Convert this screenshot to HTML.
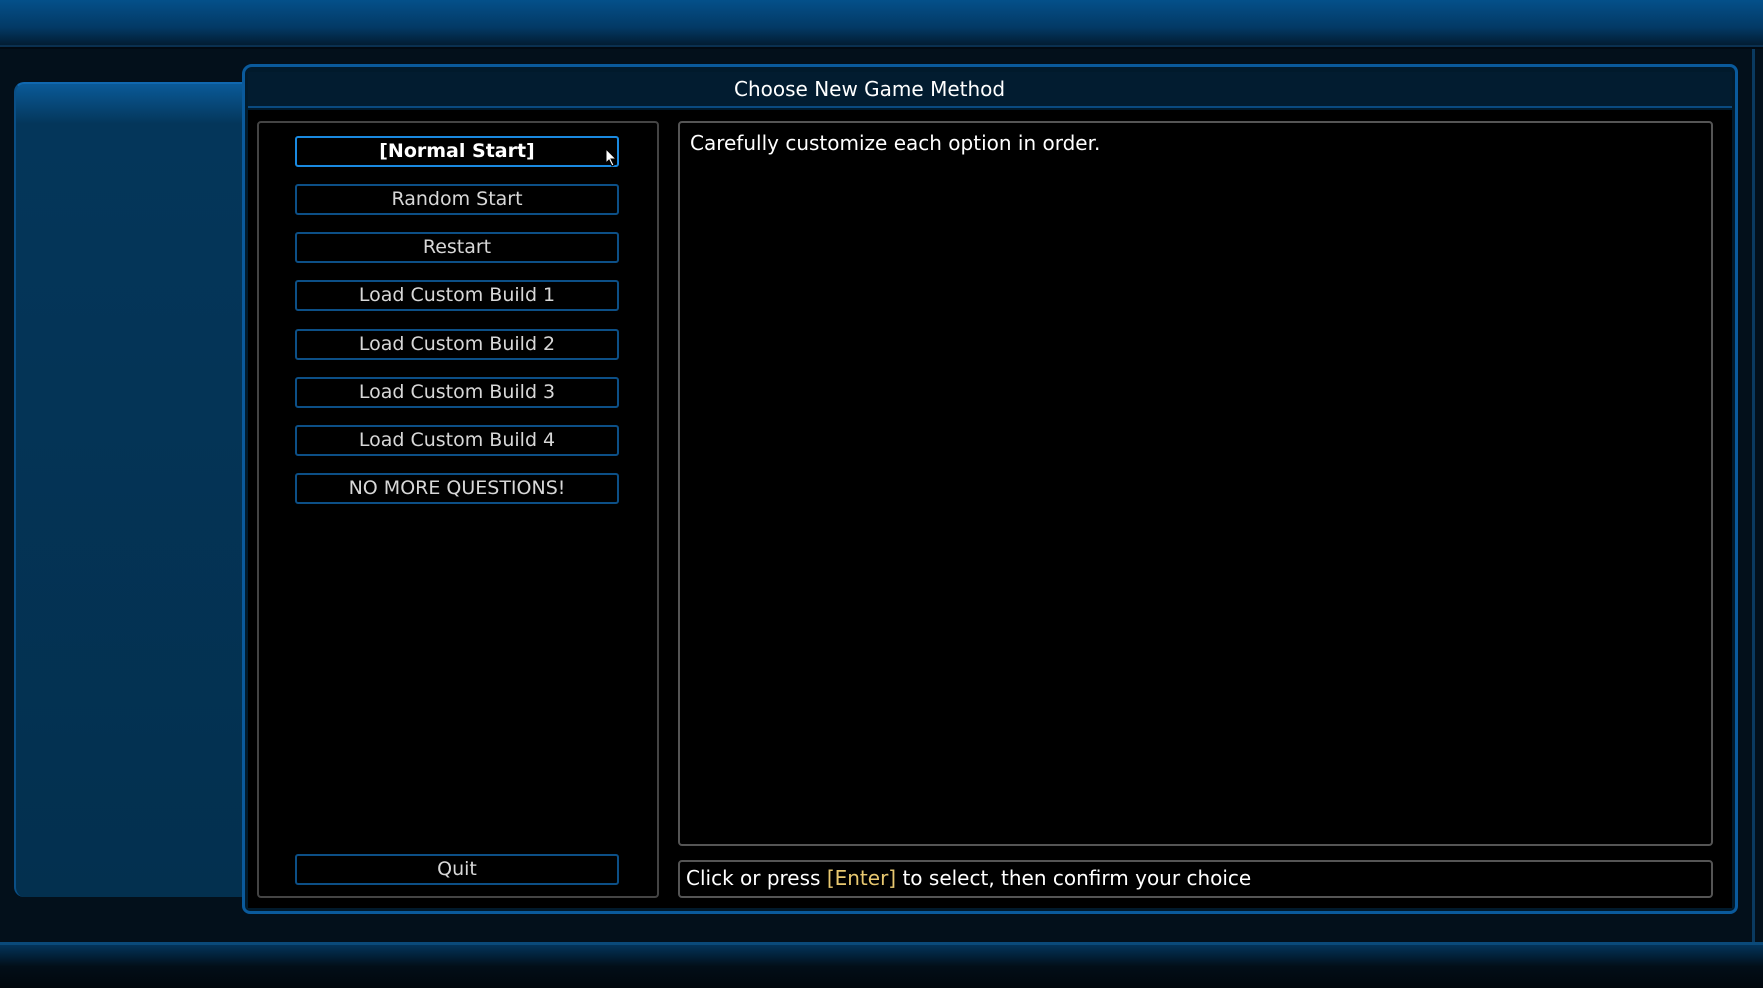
<!DOCTYPE html>
<html><head><style>
body{margin:0;width:1763px;height:988px;overflow:hidden;background:#020a12;font-family:"DejaVu Sans","Liberation Sans",sans-serif;position:relative}
div{position:absolute;box-sizing:border-box}
.btn{left:295px;width:324px;height:31px;border:2px solid #0c4f86;border-radius:3px;color:#d8d8d8;font-size:19px;text-align:center;line-height:26px;background:#000}
</style></head><body>
<div style="left:0;top:0;width:1763px;height:47px;background:linear-gradient(#04508a,#033a66 60%,#021d33);border-bottom:2px solid #0a3050"></div>
<div style="left:0;top:49px;width:1763px;height:895px;background:#03101b"></div>
<div style="left:1752px;top:49px;width:3px;height:893px;background:#0a3a60"></div>
<div style="left:0;top:942px;width:1763px;height:3px;background:#0a4a7a"></div>
<div style="left:0;top:945px;width:1763px;height:43px;background:linear-gradient(#03345a,#020e18 50%,#01070d)"></div>
<div style="left:14px;top:82px;width:232px;height:815px;background:linear-gradient(#0a5a98,#04365a 40px,#03304f);border-radius:10px 0 0 10px;border-left:2px solid #0a4f86;border-top:2px solid #1068b0"></div>
<div style="left:242px;top:64px;width:1496px;height:850px;background:#011a2c;border:3px solid #0a5a9c;border-radius:10px 8px 8px 8px"></div>
<div style="left:248px;top:72px;width:1484px;height:36px;background:#021c30;border-bottom:2px solid #0a4a80"></div>
<div style="left:734px;top:72px;width:300px;height:36px;color:#fff;font-size:20px;line-height:34px;white-space:nowrap">Choose New Game Method</div>
<div style="left:248px;top:110px;width:1484px;height:798px;background:#000"></div>
<div style="left:257px;top:121px;width:402px;height:777px;border:2px solid #444;border-radius:4px;background:#000"></div>
<div style="left:678px;top:121px;width:1035px;height:725px;border:2px solid #555;border-radius:4px;background:#000;color:#fff;font-size:20px;padding:8px 10px">Carefully customize each option in order.</div>
<div style="left:678px;top:860px;width:1035px;height:38px;border:2px solid #555;border-radius:4px;background:#000;color:#fff;font-size:20px;padding:4px 6px">Click or press <span style="color:#e8c870">[Enter]</span> to select, then confirm your choice</div>
<div class="btn" style="top:136px;border-color:#1a8ae0;color:#fff;font-weight:bold">[Normal Start]</div>
<div class="btn" style="top:184px">Random Start</div>
<div class="btn" style="top:232px">Restart</div>
<div class="btn" style="top:280px">Load Custom Build 1</div>
<div class="btn" style="top:329px">Load Custom Build 2</div>
<div class="btn" style="top:377px">Load Custom Build 3</div>
<div class="btn" style="top:425px">Load Custom Build 4</div>
<div class="btn" style="top:473px">NO MORE QUESTIONS!</div>
<div class="btn" style="top:854px">Quit</div>
<svg style="position:absolute;left:605px;top:148px" width="14" height="20"><path d="M1 1 L1 15 L4 12 L7 18 L9 17 L6 11 L11 11 Z" fill="#fff" stroke="#000" stroke-width="1"/></svg>
</body></html>
